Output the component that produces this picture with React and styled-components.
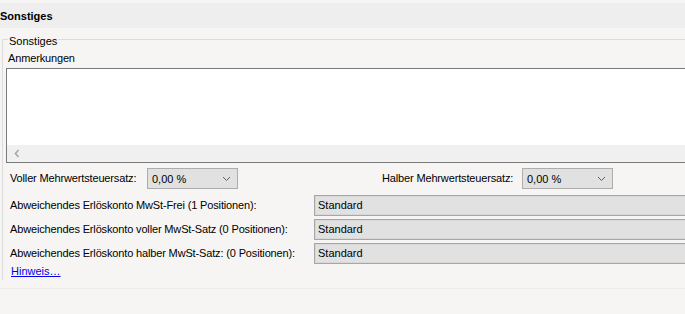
import React from 'react';
import styled, { createGlobalStyle } from 'styled-components';

const Global = createGlobalStyle`
  html, body {
    margin: 0;
    padding: 0;
    background: #f6f5f3;
    overflow: hidden;
  }
  body {
    font-family: "Liberation Sans", Arial, sans-serif;
    font-size: 11px;
    color: #000;
  }
`;

const Page = styled.div`
  width: 685px;
  height: 314px;
  padding-top: 3px;
  box-sizing: border-box;
  overflow: hidden;
`;

const Header = styled.div`
  height: 25px;
  line-height: 26px;
  background: #eeeeee;
  font-weight: bold;
  font-size: 11px;
`;

const Group = styled.div`
  position: relative;
  margin: 11px 0 0 2px;
  width: 760px;
  border-top: 1px solid #dcdcdc;
  border-left: 1px solid #dcdcdc;
  padding: 12px 0 2px 3px;
`;

const Legend = styled.span`
  position: absolute;
  top: -5px;
  left: 5px;
  padding: 0 1px;
  line-height: 13px;
  background: #f6f5f3;
`;

const Label = styled.div`
  line-height: 13px;
  letter-spacing: -0.15px;
  padding-left: ${(p) => p.$indent || 0}px;
  width: ${(p) => (p.$width ? `${p.$width}px` : 'auto')};
  white-space: nowrap;
  flex-shrink: 0;
`;

const NoteBox = styled.div`
  margin-top: 3px;
  height: 95px;
  box-sizing: border-box;
  border: 1px solid #7a7a7a;
  background: #fff;
  display: flex;
  flex-direction: column;
  justify-content: flex-end;
`;

const HScroll = styled.div`
  height: 17px;
  background: #f0f0f0;
  display: flex;
  align-items: center;
  padding-left: 7px;
`;

const RateRow = styled.div`
  display: flex;
  align-items: center;
  margin-top: 5px;
  padding-left: 4px;
`;

const RateGroup = styled.div`
  display: flex;
  align-items: center;
  margin-left: ${(p) => p.$offset || 0}px;
`;

const Combo = styled.div`
  width: 91px;
  height: 21px;
  box-sizing: border-box;
  border: 1px solid #adadad;
  background: #e1e1e1;
  display: flex;
  align-items: center;
  justify-content: space-between;
  padding: 0 6px 0 4px;
`;

const AccountList = styled.div`
  display: flex;
  flex-direction: column;
  gap: 3px;
  margin-top: 6px;
`;

const AccountRow = styled.div`
  display: grid;
  grid-template-columns: 304px 1fr;
  align-items: center;
  padding-left: 4px;
`;

const AccountField = styled.div`
  height: 21px;
  box-sizing: border-box;
  border: 1px solid #a6a6a6;
  box-shadow: inset 0 0 0 1px #d8d8d8;
  background: #e1e1e1;
  line-height: 19px;
  padding-left: 3px;
`;

const Link = styled.a`
  display: inline-block;
  margin: 1px 0 0 5px;
  line-height: 13px;
  color: #0000ee;
  text-decoration: underline;
  cursor: pointer;
`;

const Separator = styled.div`
  margin-top: 8px;
  border-top: 1px solid #ebebeb;
`;

const Chevron = () => (
  <svg width="9" height="6" viewBox="0 0 9 6">
    <path d="M1 1 L4.5 4.5 L8 1" fill="none" stroke="#606060" strokeWidth="1" />
  </svg>
);

const LeftArrow = () => (
  <svg width="6" height="9" viewBox="0 0 6 9">
    <path d="M4.5 1 L1.5 4.5 L4.5 8" fill="none" stroke="#a6a6a6" strokeWidth="1.6" />
  </svg>
);

const accounts = [
  'Abweichendes Erlöskonto MwSt-Frei (1 Positionen):',
  'Abweichendes Erlöskonto voller MwSt-Satz (0 Positionen):',
  'Abweichendes Erlöskonto halber MwSt-Satz: (0 Positionen):',
];

const App = () => (
  <Page>
    <Global />
    <Header>Sonstiges</Header>
    <Group>
      <Legend>Sonstiges</Legend>
      <Label $indent={2}>Anmerkungen</Label>
      <NoteBox>
        <HScroll>
          <LeftArrow />
        </HScroll>
      </NoteBox>
      <RateRow>
        <RateGroup>
          <Label $width={137}>Voller Mehrwertsteuersatz:</Label>
          <Combo>
            0,00 %
            <Chevron />
          </Combo>
        </RateGroup>
        <RateGroup $offset={144}>
          <Label $width={140}>Halber Mehrwertsteuersatz:</Label>
          <Combo>
            0,00 %
            <Chevron />
          </Combo>
        </RateGroup>
      </RateRow>
      <AccountList>
        {accounts.map((a) => (
          <AccountRow key={a}>
            <Label>{a}</Label>
            <AccountField>Standard</AccountField>
          </AccountRow>
        ))}
      </AccountList>
      <Link>Hinweis…</Link>
    </Group>
    <Separator />
  </Page>
);

export default App;
